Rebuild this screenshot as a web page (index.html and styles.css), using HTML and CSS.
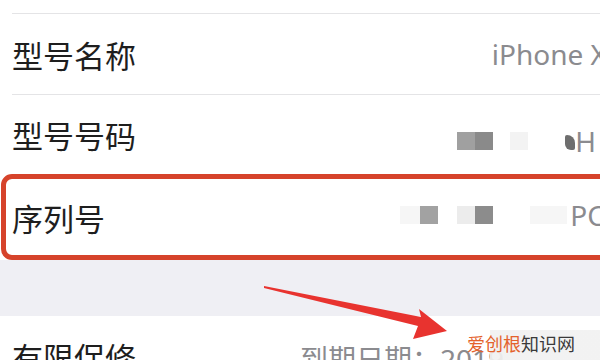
FILE: index.html
```html
<!DOCTYPE html>
<html lang="zh-CN">
<head>
    <meta charset="UTF-8">
    <meta name="viewport" content="width=device-width, initial-scale=1.0">
    <title>关于本机</title>
    <link rel="stylesheet" href="styles.css">
</head>
<body>
    <div class="screen">
        <div class="group">
            <div class="row row-top"></div>
            <div class="row">
                <span class="label">型号名称</span>
                <span class="value model">iPhone X</span>
            </div>
            <div class="row">
                <span class="label">型号号码</span>
                <span class="value number">
                    <span class="blur b-mid"></span><span class="blur b-dark"></span>
                    <span class="blur b-light"></span>
                    <span class="blur b-tiny"></span>H
                </span>
            </div>
            <div class="row marked">
                <span class="label">序列号</span>
                <span class="value serial">
                    <span class="blur b-faint"></span><span class="blur b-mid"></span>
                    <span class="blur b-light"></span><span class="blur b-dark"></span>
                    <span class="blur b-faint wide"></span>PC
                </span>
            </div>
        </div>

        <div class="spacer"></div>

        <div class="group">
            <div class="row row-bottom">
                <span class="label">有限保修</span>
                <span class="value date">到期日期：2019</span>
            </div>
        </div>

        <svg class="arrow" width="600" height="360" viewBox="0 0 600 360">
            <polygon points="264,286 421,317 419,309 447,331 413,339 418,326 264,288" fill="#e8332f"/>
        </svg>

        <div class="watermark"><span class="wm-brand">爱创根</span>知识网</div>
    </div>
</body>
</html>
```

FILE: styles.css
```css
* {
    margin: 0;
    padding: 0;
    box-sizing: border-box;
}

html, body {
    width: 600px;
    height: 360px;
    overflow: hidden;
}

body {
    font-family: "Noto Sans", "Noto Sans CJK SC", sans-serif;
    background: #ffffff;
}

.screen {
    position: relative;
    width: 600px;
    height: 360px;
    overflow: hidden;
}

.group {
    background: #ffffff;
    display: flex;
    flex-direction: column;
}

.row {
    display: flex;
    align-items: center;
    justify-content: space-between;
    height: 80px;
    padding-left: 12px;
    border-top: 1px solid #e4e4e6;
    border-image: linear-gradient(to right, transparent 13px, #e4e4e6 13px) 1;
    white-space: nowrap;
}

.row-top {
    height: 14px;
    border-top: none;
    border-bottom: 1px solid #e4e4e6;
    border-image: linear-gradient(to right, transparent 13px, #e4e4e6 13px) 1;
}

.row-top + .row {
    border-top: none;
}

.label {
    font-size: 31px;
    color: #1e1e1e;
    font-family: "Noto Sans CJK SC", sans-serif;
}

.value {
    font-size: 28px;
    color: #8b8b8f;
    display: flex;
    align-items: center;
}

.model {
    margin-right: -7px;
}

.number {
    margin-right: 4px;
    margin-top: 12px;
}

.blur {
    display: inline-block;
    width: 18px;
    height: 18px;
}

.b-mid {
    background: #a0a0a0;
}

.b-dark {
    background: #8a8a8a;
    margin-right: 17px;
}

.b-light {
    background: #f3f3f3;
    margin-right: 37px;
}

.b-tiny {
    width: 10px;
    height: 15px;
    background: #6e6e6e;
    border-radius: 2px 8px 2px 6px;
    margin-top: 4px;
}

.marked {
    height: 86px;
    border: 5px solid #d6432b;
    border-radius: 11px;
    margin: 0 -30px 0 1px;
    padding-left: 6px;
    border-image: none;
}

.serial {
    margin-right: 20px;
    margin-top: -4px;
}

.b-faint {
    width: 20px;
    background: #f6f6f6;
}

.serial .b-mid {
    background: #a2a2a2;
    margin-right: 19px;
}

.serial .b-light {
    background: #ececec;
    margin-right: 0;
}

.serial .b-dark {
    background: #8c8c8c;
    margin-right: 37px;
}

.wide {
    width: 37px;
    margin-right: 3px;
}

.spacer {
    height: 56px;
    background: #efeff4;
}

.row-bottom {
    border-top: none;
    align-items: flex-start;
    justify-content: flex-start;
    padding-top: 18px;
}

.date {
    margin-left: 164px;
    margin-top: 4px;
}

.arrow {
    position: absolute;
    top: 0;
    left: 0;
}

.watermark {
    position: absolute;
    right: 0;
    bottom: 0;
    width: 150px;
    height: 30px;
    padding-left: 17px;
    background: linear-gradient(to right, transparent 40px, rgba(241, 241, 241, 0.92) 40px);
    font-family: "Noto Sans CJK SC", sans-serif;
    font-size: 18px;
    line-height: 26px;
    color: #3a3a3a;
}

.wm-brand {
    color: #e4622c;
}
```
